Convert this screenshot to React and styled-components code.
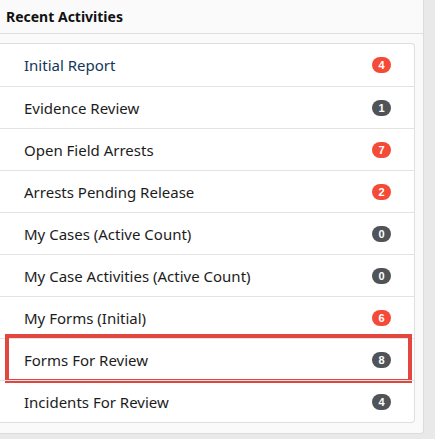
import React from 'react';
import styled, { createGlobalStyle } from 'styled-components';

const GlobalStyle = createGlobalStyle`
  html, body {
    margin: 0;
    padding: 0;
    background: #e9e9e9;
  }
  body {
    font-family: 'Noto Sans', 'Open Sans', sans-serif;
  }
`;

const Page = styled.div`
  width: 435px;
  height: 439px;
  overflow: hidden;
  background: #e9e9e9;
`;

const Panel = styled.div`
  width: 424px;
  height: 434px;
  box-sizing: border-box;
  background: #fafafa;
  border-right: 1px solid #dcdcdc;
  border-bottom: 1px solid #dcdcdc;
  border-bottom-right-radius: 4px;
`;

const Header = styled.div`
  height: 34px;
  box-sizing: border-box;
  padding: 7px 0 0 6px;
  border-bottom: 1px solid #dedede;
  font-size: 14px;
  font-weight: 700;
  color: #111;
  line-height: 20px;
`;

const Card = styled.ul`
  list-style: none;
  margin: 9px 0 0 0;
  padding: 0;
  width: 415px;
  box-sizing: border-box;
  background: #fff;
  border: 1px solid #dfdfdf;
  border-left: none;
  border-radius: 0 4px 4px 0;
`;

const Row = styled.li`
  position: relative;
  height: 42px;
  box-sizing: border-box;
  display: flex;
  align-items: center;
  justify-content: space-between;
  padding: 0 23px 0 24px;
  border-top: ${p => (p.$first ? 'none' : '1px solid #e3e3e3')};
  font-size: 15px;
  color: ${p => (p.$link ? '#12365c' : '#1c1c1c')};
`;

const Highlight = styled.span`
  position: absolute;
  left: 5px;
  right: 2px;
  top: -5px;
  bottom: -3px;
  border: 4.5px solid #e2463f;
  pointer-events: none;
`;

const Badge = styled.span`
  min-width: 19px;
  height: 16px;
  box-sizing: border-box;
  padding: 0 5px;
  border-radius: 8px;
  background: ${p => (p.$tone === 'red' ? '#f44b38' : '#505357')};
  color: #fff;
  font-size: 11px;
  font-weight: 700;
  line-height: 16px;
  text-align: center;
  font-family: 'Liberation Sans', Arial, sans-serif;
`;

const items = [
  { label: 'Initial Report', count: 4, tone: 'red', link: true },
  { label: 'Evidence Review', count: 1, tone: 'dark' },
  { label: 'Open Field Arrests', count: 7, tone: 'red' },
  { label: 'Arrests Pending Release', count: 2, tone: 'red' },
  { label: 'My Cases (Active Count)', count: 0, tone: 'dark' },
  { label: 'My Case Activities (Active Count)', count: 0, tone: 'dark' },
  { label: 'My Forms (Initial)', count: 6, tone: 'red' },
  { label: 'Forms For Review', count: 8, tone: 'dark', marked: true },
  { label: 'Incidents For Review', count: 4, tone: 'dark' },
];

export default function App() {
  return (
    <Page>
      <GlobalStyle />
      <Panel>
        <Header>Recent Activities</Header>
        <Card>
          {items.map((item, idx) => (
            <Row key={item.label} $first={idx === 0} $link={item.link}>
              <span>{item.label}</span>
              <Badge $tone={item.tone}>{item.count}</Badge>
              {item.marked && <Highlight />}
            </Row>
          ))}
        </Card>
      </Panel>
    </Page>
  );
}
